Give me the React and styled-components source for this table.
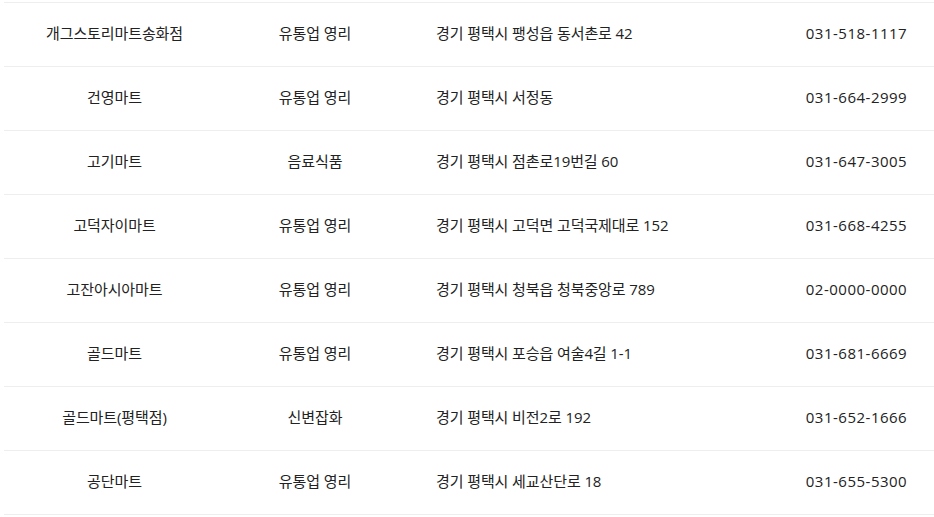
import React from "react";
import styled, { createGlobalStyle } from "styled-components";

const GlobalStyle = createGlobalStyle`
  html, body {
    margin: 0;
    padding: 0;
    background: #fff;
  }
  body {
    font-family: "Open Sans", "Noto Sans CJK KR", sans-serif;
    color: #222;
  }
`;

const stores = [
  { name: "개그스토리마트송화점", type: "유통업 영리", addr: "경기 평택시 팽성읍 동서촌로 42", tel: "031-518-1117" },
  { name: "건영마트", type: "유통업 영리", addr: "경기 평택시 서정동", tel: "031-664-2999" },
  { name: "고기마트", type: "음료식품", addr: "경기 평택시 점촌로19번길 60", tel: "031-647-3005" },
  { name: "고덕자이마트", type: "유통업 영리", addr: "경기 평택시 고덕면 고덕국제대로 152", tel: "031-668-4255" },
  { name: "고잔아시아마트", type: "유통업 영리", addr: "경기 평택시 청북읍 청북중앙로 789", tel: "02-0000-0000" },
  { name: "골드마트", type: "유통업 영리", addr: "경기 평택시 포승읍 여술4길 1-1", tel: "031-681-6669" },
  { name: "골드마트(평택점)", type: "신변잡화", addr: "경기 평택시 비전2로 192", tel: "031-652-1666" },
  { name: "공단마트", type: "유통업 영리", addr: "경기 평택시 세교산단로 18", tel: "031-655-5300" },
];

const Wrapper = styled.div`
  padding: 2px 0 0 4px;
`;

const List = styled.div`
  border-bottom: 1px solid #eee;
`;

const Row = styled.div`
  display: grid;
  grid-template-columns: 221px 180px 374px 155px;
  align-items: center;
  height: 60px;
  padding-bottom: 3px;
  border-top: 1px solid #eee;
  font-size: 15px;
  line-height: 20px;
`;

const Cell = styled.div`
  text-align: ${(p) => (p.left ? "left" : "center")};
  padding-left: ${(p) => (p.left ? "31px" : "0")};
  white-space: nowrap;
  letter-spacing: ${(p) => (p.tel ? "0.5px" : "-0.1px")};
`;

export default function App() {
  return (
    <>
      <GlobalStyle />
      <Wrapper>
        <List>
          {stores.map((s) => (
            <Row key={s.name}>
              <Cell>{s.name}</Cell>
              <Cell>{s.type}</Cell>
              <Cell left>{s.addr}</Cell>
              <Cell tel>{s.tel}</Cell>
            </Row>
          ))}
        </List>
      </Wrapper>
    </>
  );
}
